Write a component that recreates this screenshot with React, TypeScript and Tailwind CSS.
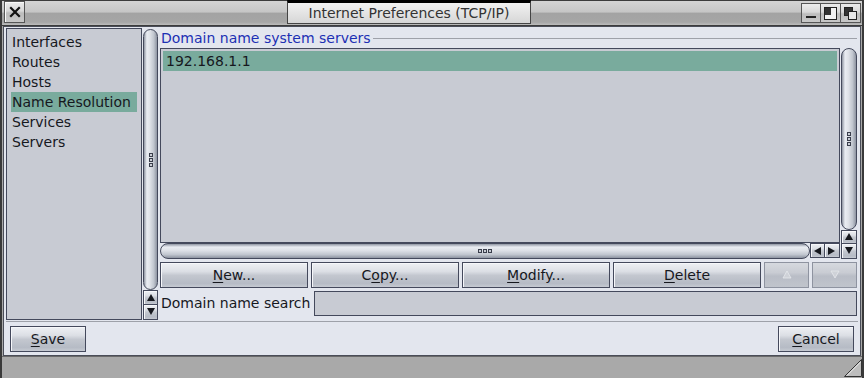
import React from 'react';

const font = { fontFamily: '"DejaVu Sans", "Noto Sans", sans-serif' };

const btnBg =
  'bg-[linear-gradient(180deg,#eef0f4_0%,#dcdfe5_35%,#c3c7cf_52%,#b6bbc5_85%,#c6cad2_100%)]';
const vBarBg =
  'bg-[linear-gradient(90deg,#8f95a2_0%,#e9ecf2_22%,#dfe2e8_45%,#c1c6cf_75%,#8e94a1_100%)]';
const hBarBg =
  'bg-[linear-gradient(180deg,#8f95a2_0%,#e9ecf2_22%,#dfe2e8_45%,#c1c6cf_75%,#8e94a1_100%)]';

function Tri({ dir, disabled }: { dir: 'up' | 'down' | 'left' | 'right'; disabled?: boolean }) {
  const pts = {
    up: '1,8 5,1 9,8',
    down: '1,1 5,8 9,1',
    left: '8,1 1,5 8,9',
    right: '1,1 8,5 1,9',
  }[dir];
  return (
    <svg width="10" height="10" viewBox="0 0 10 10">
      <polygon
        points={pts}
        fill={disabled ? '#cfd2d8' : '#16181e'}
        stroke={disabled ? '#e6e8ec' : 'none'}
        strokeWidth="0.8"
      />
    </svg>
  );
}

function ArrowBtn({ dir, className = '' }: { dir: 'up' | 'down' | 'left' | 'right'; className?: string }) {
  return (
    <div
      className={`flex items-center justify-center border border-[#44495c] ${btnBg} shadow-[inset_1px_1px_0_#f6f7fa] ${className}`}
    >
      <Tri dir={dir} />
    </div>
  );
}

function Knob({ vertical }: { vertical?: boolean }) {
  return (
    <div className={`flex ${vertical ? 'flex-col' : 'flex-row'} gap-[1px]`}>
      {[0, 1, 2].map((i) => (
        <div key={i} className="h-[4px] w-[4px] border border-[#3a3e4c] bg-[#c8ccd4]" />
      ))}
    </div>
  );
}

function Button({
  children,
  className = '',
  disabled,
}: {
  children?: React.ReactNode;
  className?: string;
  disabled?: boolean;
}) {
  return (
    <div
      className={`flex items-center justify-center border ${
        disabled
          ? 'border-[#8e93a0] bg-[linear-gradient(180deg,#d6d9df_0%,#c9ccd3_40%,#b9bdc6_55%,#c0c4cc_100%)]'
          : `border-[#44495c] ${btnBg} shadow-[inset_1px_1px_0_#f6f7fa]`
      } text-[14px] text-[#16181e] ${className}`}
    >
      {children}
    </div>
  );
}

const U = ({ children }: { children: React.ReactNode }) => (
  <span className="underline underline-offset-[2px] decoration-1">{children}</span>
);

const gadgetBg =
  'bg-[linear-gradient(180deg,#ececec_0%,#d8d8d8_45%,#bcbcbc_55%,#c8c8c8_100%)]';

export default function App() {
  const items = ['Interfaces', 'Routes', 'Hosts', 'Name Resolution', 'Services', 'Servers'];
  return (
    <div
      style={font}
      className="flex h-[378px] w-[864px] flex-col overflow-hidden border-x-[2px] border-[#3a3a3a] bg-[#a9a9a9] text-[#16181e]"
    >
      {/* title bar */}
      <div className="flex h-[26px] items-start border-b border-t border-[#3c3c3c] bg-[linear-gradient(180deg,#d4d4d4_0%,#c6c6c6_45%,#a3a3a3_52%,#a6a6a6_88%,#bcbcbc_100%)]">
        <div
          className={`ml-[2px] flex h-[22px] w-[21px] items-center justify-center border border-[#555] ${gadgetBg} shadow-[inset_1px_1px_0_#fafafa]`}
        >
          <svg width="12" height="12" viewBox="0 0 12 12">
            <path d="M2 2 L10 10 M10 2 L2 10" stroke="#111" strokeWidth="2.2" strokeLinecap="square" />
          </svg>
        </div>
        <div className="flex flex-1 justify-center pr-[8px]">
          <div className="-mt-[1px] flex h-[24px] w-[244px] items-center justify-center border-x border-b border-t-[3px] border-[#444] border-t-black bg-[linear-gradient(180deg,#f2f2f2_0%,#e4e4e4_50%,#d6d6d6_100%)] text-[14px] text-[#333]">
            Internet Preferences (TCP/IP)
          </div>
        </div>
        <div className="mr-[1px] mt-[2px] flex">
          <div className={`flex h-[20px] w-[20px] items-end justify-center border border-[#555] ${gadgetBg} pb-[4px]`}>
            <div className="h-[2px] w-[10px] bg-[#222]" />
          </div>
          <div className={`flex h-[20px] w-[20px] items-center justify-center border border-l-0 border-[#555] ${gadgetBg}`}>
            <svg width="13" height="13" viewBox="0 0 13 13">
              <rect x="0.5" y="0.5" width="12" height="12" fill="#f2f2f2" stroke="#222" />
              <rect x="1" y="1" width="6" height="7" fill="#333" />
            </svg>
          </div>
          <div className={`flex h-[20px] w-[20px] items-center justify-center border border-l-0 border-[#555] ${gadgetBg}`}>
            <svg width="13" height="13" viewBox="0 0 13 13">
              <rect x="0.5" y="0.5" width="8" height="8" fill="#333" stroke="#222" />
              <rect x="4.5" y="4.5" width="8" height="8" fill="#e8e8e8" stroke="#222" />
            </svg>
          </div>
        </div>
      </div>

      {/* body */}
      <div className="mx-[1px] flex flex-col border border-[#4a4d58] bg-[#e3e6ee] pt-[1px]">
        <div className="flex h-[292px] pl-[2px] pr-[3px]">
          {/* left list */}
          <div className="flex w-[136px] flex-col border border-[#44495c] bg-[#c8cbd3] px-[4px] pt-[3px] text-[14px]">
            {items.map((it) => (
              <div
                key={it}
                className={`flex h-[20px] items-center whitespace-nowrap pl-[1px] ${
                  it === 'Name Resolution' ? 'bg-[#79ab9d]' : ''
                }`}
              >
                {it}
              </div>
            ))}
          </div>
          {/* left scroller */}
          <div className="ml-[1px] flex w-[15px] flex-col">
            <div
              className={`mt-[1px] flex h-[261px] items-center justify-center rounded-full border border-[#44495c] ${vBarBg}`}
            >
              <Knob vertical />
            </div>
            <ArrowBtn dir="up" className="h-[15px]" />
            <ArrowBtn dir="down" className="h-[15px] border-t-0" />
          </div>

          {/* right panel */}
          <div className="ml-[2px] flex flex-1 flex-col">
            <div className="flex h-[20px] items-center">
              <span className="whitespace-nowrap pl-[1px] text-[14px] text-[#1c30b4]">
                Domain name system servers
              </span>
              <div className="ml-[2px] mt-[1px] h-[2px] flex-1 border-t border-[#9ea1a9] border-b-white" />
            </div>
            <div className="flex">
              <div className="flex w-[680px] flex-col">
                <div className="h-[195px] border border-[#44495c] bg-[#c8cbd3] px-[2px] pt-[2px] text-[14px]">
                  <div className="flex h-[20px] items-center bg-[#79ab9d] pl-[3px]">192.168.1.1</div>
                </div>
                <div className="flex h-[16px]">
                  <div
                    className={`flex h-[16px] w-[650px] items-center justify-center rounded-full border border-[#44495c] ${hBarBg}`}
                  >
                    <Knob />
                  </div>
                  <ArrowBtn dir="left" className="h-[15px] w-[15px]" />
                  <ArrowBtn dir="right" className="h-[15px] w-[15px] border-l-0" />
                </div>
              </div>
              <div className="ml-[1px] flex w-[16px] flex-col">
                <div
                  className={`flex h-[182px] items-center justify-center rounded-full border border-[#44495c] ${vBarBg}`}
                >
                  <Knob vertical />
                </div>
                <ArrowBtn dir="up" className="h-[14px]" />
                <ArrowBtn dir="down" className="h-[15px] border-t-0" />
              </div>
            </div>
            <div className="mt-[3px] flex h-[26px] gap-[3px]">
              <Button className="flex-1">
                <U>N</U>ew...
              </Button>
              <Button className="flex-1">
                C<U>o</U>py...
              </Button>
              <Button className="flex-1">
                <U>M</U>odify...
              </Button>
              <Button className="flex-1">
                <U>D</U>elete
              </Button>
              <Button className="w-[45px]" disabled>
                <Tri dir="up" disabled />
              </Button>
              <Button className="w-[45px]" disabled>
                <Tri dir="down" disabled />
              </Button>
            </div>
            <div className="mt-[3px] flex h-[25px] items-center">
              <span className="whitespace-nowrap pl-[1px] text-[14px]">Domain name search</span>
              <div className="ml-[4px] h-[25px] flex-1 border border-[#44495c] bg-[#c8cbd3]" />
            </div>
          </div>
        </div>

        <div className="mx-[2px] mt-[1px] h-[2px] border-t border-[#9ea1a9] border-b-white" />

        <div className="flex justify-between px-[6px] pb-[3px] pt-[3px]">
          <Button className="h-[26px] w-[76px]">
            <U>S</U>ave
          </Button>
          <Button className="h-[26px] w-[76px]">
            <U>C</U>ancel
          </Button>
        </div>
      </div>

      {/* bottom frame */}
      <div className="flex flex-1 items-end justify-end border-t border-[#6a6a6a]">
        <svg width="18" height="18" viewBox="0 0 18 18" className="mb-[1px]">
          <path d="M0.5 17.5 L17.5 0.5 L17.5 17.5 Z" fill="#bdbdbd" stroke="#333" />
          <path d="M3 16.5 L16.5 3" stroke="#eee" />
        </svg>
      </div>
    </div>
  );
}
